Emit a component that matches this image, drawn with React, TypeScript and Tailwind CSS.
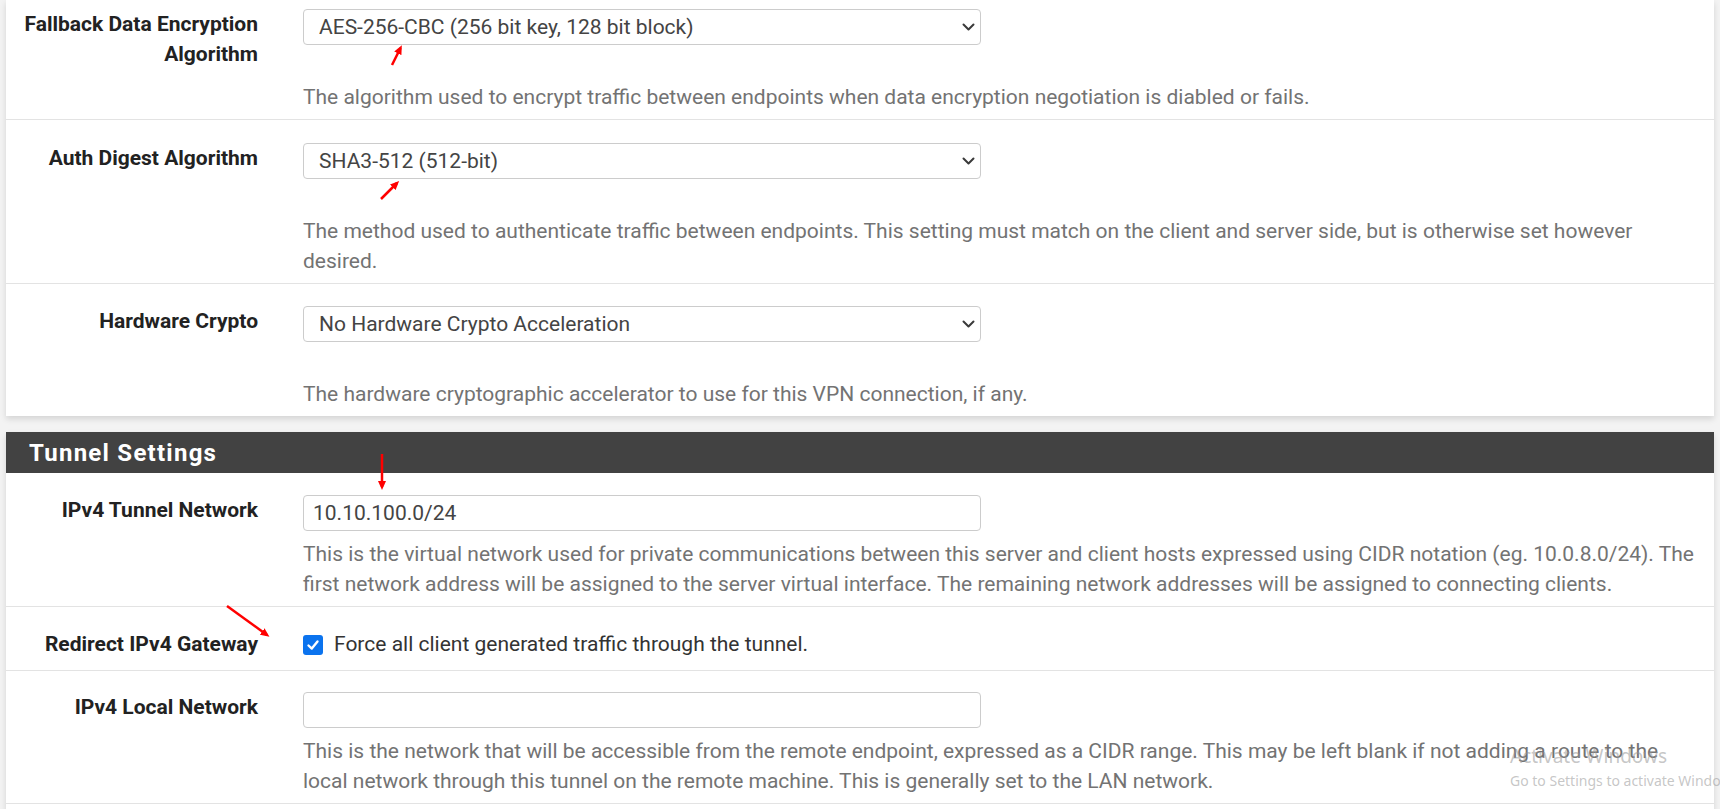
import React from "react";

const Chevron = () => (
  <svg
    width="13"
    height="9"
    viewBox="0 0 13 9"
    className="pointer-events-none absolute right-[6px] top-[14px]"
  >
    <polyline points="1.5,1.5 6.5,6.5 11.5,1.5" fill="none" stroke="#3a3a3a" strokeWidth="2" strokeLinecap="round" strokeLinejoin="round" />
  </svg>
);

function Select({ value }: { value: string }) {
  return (
    <div className="relative w-[678px] h-[36px]">
      <select
        defaultValue={value}
        className="appearance-none w-full h-full rounded-[4px] border border-[#cccccc] bg-white pl-[15px] pr-[30px] text-[21px] leading-[30px] text-[#444444] outline-none"
        style={{ fontFamily: "Roboto, 'Liberation Sans', sans-serif" }}
      >
        <option>{value}</option>
      </select>
      <Chevron />
    </div>
  );
}

function TextInput({ value }: { value: string }) {
  return (
    <input
      readOnly
      value={value}
      className="block w-[678px] h-[36px] rounded-[4px] border border-[#cccccc] bg-white pl-[9px] text-[21px] text-[#444444] outline-none"
      style={{ fontFamily: "Roboto, 'Liberation Sans', sans-serif" }}
    />
  );
}

function Row({
  label,
  children,
  rowClass,
}: {
  label: React.ReactNode;
  children: React.ReactNode;
  rowClass: string;
}) {
  return (
    <div className={"flex " + rowClass}>
      <div className="w-[252px] shrink-0 text-right font-bold text-[21px] leading-[30px] text-[#222222]">
        {label}
      </div>
      <div className="ml-[45px] flex-1 pr-[15px]">{children}</div>
    </div>
  );
}

const Help = ({ children, top }: { children: React.ReactNode; top: string }) => (
  <div className={"text-[21px] leading-[30px] text-[#737373] " + top}>{children}</div>
);

export default function App() {
  return (
    <div
      className="relative w-[1720px] h-[809px] overflow-hidden bg-[#f3f3f3]"
      style={{ fontFamily: "Roboto, 'Liberation Sans', sans-serif" }}
    >
      <div className="px-[6px]">
        {/* Crypto panel (scrolled) */}
        <div className="bg-white shadow-[0_3px_6px_rgba(0,0,0,0.13)]">
          <Row label="Fallback Data Encryption Algorithm" rowClass="pt-[9px] pb-[7px] border-b border-[#e3e3e3]">
            <Select value="AES-256-CBC (256 bit key, 128 bit block)" />
            <Help top="mt-[37px]">
              The algorithm used to encrypt traffic between endpoints when data encryption negotiation is diabled or fails.
            </Help>
          </Row>
          <Row label="Auth Digest Algorithm" rowClass="pt-[23px] pb-[7px] border-b border-[#e3e3e3]">
            <Select value="SHA3-512 (512-bit)" />
            <Help top="mt-[37px]">
              The method used to authenticate traffic between endpoints. This setting must match on the client and server side, but is otherwise set however desired.
            </Help>
          </Row>
          <Row label="Hardware Crypto" rowClass="pt-[22px] pb-[7px]">
            <Select value="No Hardware Crypto Acceleration" />
            <Help top="mt-[37px]">The hardware cryptographic accelerator to use for this VPN connection, if any.</Help>
          </Row>
        </div>

        {/* Tunnel settings panel */}
        <div className="mt-[16px] bg-white shadow-[0_3px_6px_rgba(0,0,0,0.13)]">
          <div className="h-[41px] bg-[#424242] flex items-center pl-[23px]">
            <span className="text-white font-bold text-[24px] leading-none tracking-[1.25px]">Tunnel Settings</span>
          </div>
          <Row label="IPv4 Tunnel Network" rowClass="pt-[22px] pb-[7px] border-b border-[#e3e3e3]">
            <TextInput value="10.10.100.0/24" />
            <Help top="mt-[8px]">
              This is the virtual network used for private communications between this server and client hosts expressed using CIDR notation (eg. 10.0.8.0/24). The first network address will be assigned to the server virtual interface. The remaining network addresses will be assigned to connecting clients.
            </Help>
          </Row>
          <Row label="Redirect IPv4 Gateway" rowClass="pt-[22px] pb-[11px] border-b border-[#e3e3e3]">
            <div className="flex items-center h-[30px]">
              <span className="flex items-center justify-center w-[20px] h-[20px] rounded-[3px] bg-[#0b73ee] mt-[1px]">
                <svg width="14" height="14" viewBox="0 0 14 14">
                  <polyline points="2.5,7.5 5.8,10.6 11.5,3.4" fill="none" stroke="white" strokeWidth="2.4" strokeLinecap="round" strokeLinejoin="round" />
                </svg>
              </span>
              <span className="ml-[11px] text-[21px] leading-[30px] text-[#333333]">
                Force all client generated traffic through the tunnel.
              </span>
            </div>
          </Row>
          <Row label="IPv4 Local Network" rowClass="pt-[21px] pb-[7px] border-b border-[#e3e3e3]">
            <TextInput value="" />
            <Help top="mt-[8px]">
              This is the network that will be accessible from the remote endpoint, expressed as a CIDR range. This may be left blank if not adding a route to the local network through this tunnel on the remote machine. This is generally set to the LAN network.
            </Help>
          </Row>
          <div className="h-[40px]" />
        </div>
      </div>

      {/* Annotation arrows */}
      <svg className="pointer-events-none absolute left-0 top-0" width="1720" height="809">
        <defs>
          <marker id="ah" markerWidth="9" markerHeight="8" refX="6" refY="4" orient="auto" markerUnits="userSpaceOnUse">
            <path d="M0,0 L9,4 L0,8 Z" fill="#ff0000" />
          </marker>
        </defs>
        <line x1="392" y1="65" x2="400.5" y2="48" stroke="#ff0000" strokeWidth="2.5" markerEnd="url(#ah)" />
        <line x1="381" y1="199" x2="397" y2="183" stroke="#ff0000" strokeWidth="2.5" markerEnd="url(#ah)" />
        <line x1="382" y1="454" x2="382" y2="487" stroke="#ff0000" strokeWidth="2.5" markerEnd="url(#ah)" />
        <line x1="227" y1="606" x2="267" y2="635" stroke="#ff0000" strokeWidth="2.5" markerEnd="url(#ah)" />
      </svg>

      {/* Windows activation watermark */}
      <div
        className="pointer-events-none absolute left-[1510px] top-[744px] whitespace-nowrap text-[rgba(150,150,150,0.55)]"
        style={{ fontFamily: "'Noto Sans', 'Open Sans', sans-serif" }}
      >
        <div className="text-[19px] leading-[24px]">Activate Windows</div>
        <div className="text-[14px] leading-[20px] mt-[3px]">Go to Settings to activate Windows.</div>
      </div>
    </div>
  );
}
